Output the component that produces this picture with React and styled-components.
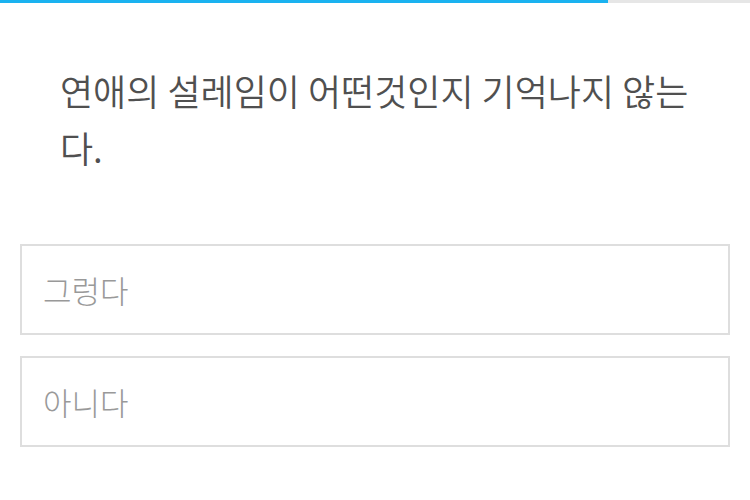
import styled, { createGlobalStyle } from 'styled-components';

const answers = ['그렁다', '아니다'];
const progress = 81;

function App() {
  return (
    <>
      <GlobalStyle />
      <Page>
        <ProgressTrack>
          <ProgressFill style={{ width: `${progress}%` }} />
        </ProgressTrack>
        <Question>연애의 설레임이 어떤것인지 기억나지 않는다.</Question>
        <AnswerList>
          {answers.map((a) => (
            <Answer key={a}>{a}</Answer>
          ))}
        </AnswerList>
      </Page>
    </>
  );
}

const GlobalStyle = createGlobalStyle`
  body {
    margin: 0;
    background: #fff;
    font-family: 'Noto Sans CJK KR', 'Noto Sans', sans-serif;
  }
`;

const Page = styled.div`
  width: 750px;
  height: 500px;
  background: #fff;
`;

const ProgressTrack = styled.div`
  height: 3px;
  background: #e6e6e6;
`;

const ProgressFill = styled.div`
  height: 100%;
  background: #1ab2f0;
`;

const Question = styled.p`
  margin: 0;
  padding: 59px 50px 0 60px;
  font-size: 36px;
  font-weight: 350;
  line-height: 57px;
  color: #505050;
  word-break: break-all;
`;

const AnswerList = styled.div`
  display: flex;
  flex-direction: column;
  gap: 21px;
  padding: 68px 20px 0;
`;

const Answer = styled.div`
  height: 91px;
  box-sizing: border-box;
  border: 2px solid #dedede;
  display: flex;
  align-items: center;
  padding-left: 21px;
  font-size: 31px;
  font-weight: 300;
  color: #999;
`;

export default App;
